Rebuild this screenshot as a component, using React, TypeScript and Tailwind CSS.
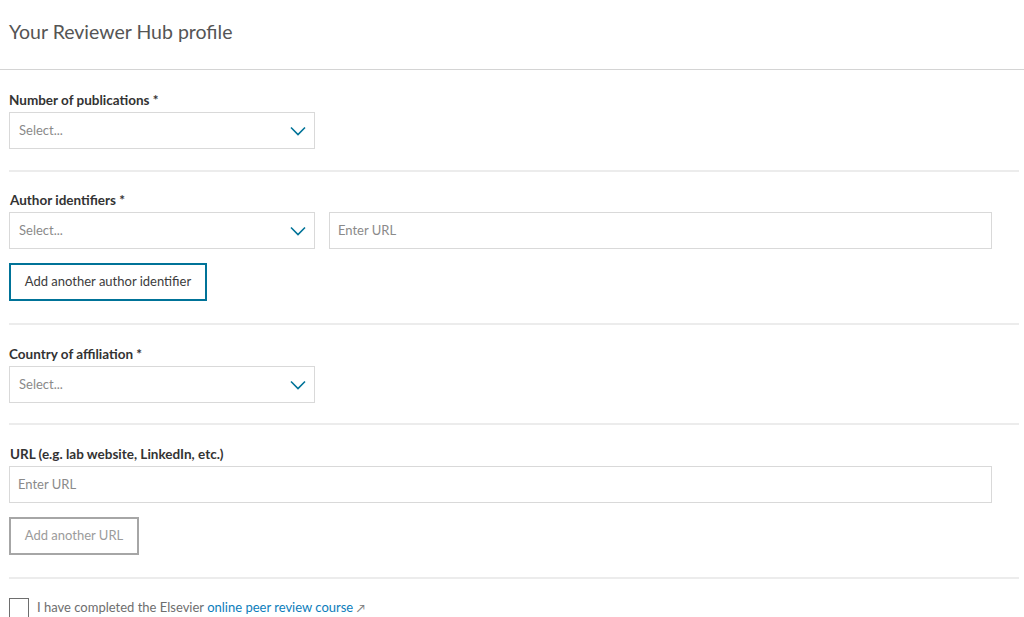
import React from "react";

const font = { fontFamily: "Lato, 'Open Sans', sans-serif" };

function Chevron() {
  return (
    <svg width="16" height="10" viewBox="0 0 16 10" fill="none" className="shrink-0">
      <path d="M1 1.5 8 8.5 15 1.5" stroke="#007398" strokeWidth="1.6" />
    </svg>
  );
}

function SelectBox() {
  return (
    <div className="w-[306px] h-[37px] border border-[#d9d9d9] bg-white flex items-center justify-between pl-[9px] pr-[8px]">
      <span className="text-[13px] text-[#8a8a8a]">Select...</span>
      <Chevron />
    </div>
  );
}

function UrlInput({ className = "" }: { className?: string }) {
  return (
    <div className={`h-[37px] border border-[#d9d9d9] bg-white flex items-center pl-[8px] ${className}`}>
      <span className="text-[13px] text-[#8a8a8a]">Enter URL</span>
    </div>
  );
}

function Label({ children }: { children: React.ReactNode }) {
  return (
    <div className="h-4 leading-4 text-[13.5px] font-bold text-[#333333] mb-1">{children}</div>
  );
}

function Divider() {
  return <div className="h-[2px] bg-[#ececec] w-[1010px]" />;
}

export default function App() {
  return (
    <div className="w-[1024px] h-[617px] overflow-hidden bg-white" style={font}>
      <div className="h-[69px] flex items-center pl-[9px] border-b border-[#d4d4d4] box-content">
        <h1 className="text-[19.5px] font-normal text-[#555555] -mt-[6px]">Your Reviewer Hub profile</h1>
      </div>

      <div className="pl-[9px]">
        <section className="pt-[22px] pb-[21px]">
          <Label>Number of publications *</Label>
          <SelectBox />
        </section>
        <Divider />

        <section className="pt-[20px] pb-[22px]">
          <div className="pl-[1px]">
            <Label>Author identifiers *</Label>
          </div>
          <div className="flex gap-[14px]">
            <SelectBox />
            <UrlInput className="w-[663px]" />
          </div>
          <button className="mt-[14px] h-[38px] w-[198px] border-2 border-[#007398] text-[13px] text-[#3c3c3c] bg-white">
            Add another author identifier
          </button>
        </section>
        <Divider />

        <section className="pt-[21px] pb-[20px]">
          <Label>Country of affiliation *</Label>
          <SelectBox />
        </section>
        <Divider />

        <section className="pt-[21px] pb-[22px]">
          <div className="pl-[1px]">
            <Label>URL (e.g. lab website, LinkedIn, etc.)</Label>
          </div>
          <UrlInput className="w-[983px]" />
          <button className="mt-[14px] h-[38px] w-[130px] border-2 border-[#a6a6a6] text-[13px] text-[#9b9b9b] bg-white">
            Add another URL
          </button>
        </section>
        <Divider />

        <div className="pt-[19px] flex items-center gap-[8px]">
          <div className="w-[20px] h-[20px] border border-[#6e6e6e] bg-white shrink-0" />
          <span className="text-[13px] text-[#6e6e6e]">
            I have completed the Elsevier{" "}
            <a className="text-[#0c7dbb]">online peer review course</a>{" "}
            <span className="text-[11px] text-[#7a7a7a]">↗</span>
          </span>
        </div>
      </div>
    </div>
  );
}
